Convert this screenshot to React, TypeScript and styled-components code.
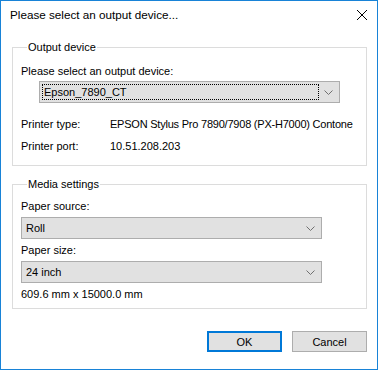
import React from "react";
import styled, { createGlobalStyle } from "styled-components";

const Global = createGlobalStyle`
  html, body { margin: 0; padding: 0; background: #ffffff; }
  body {
    font-family: "Liberation Sans", Arial, sans-serif;
    font-size: 11px;
    line-height: 16px;
    color: #000000;
  }
  * { box-sizing: border-box; }
`;

const Window = styled.div`
  width: 378px;
  height: 370px;
  border: 1px solid #1883d7;
  background: #ffffff;
  display: flex;
  flex-direction: column;
`;

const TitleBar = styled.div`
  height: 29px;
  display: flex;
  align-items: flex-start;
  justify-content: space-between;
  padding: 6px 10px 0 9px;
`;

const Title = styled.span`
  font-size: 11.7px;
  line-height: 16px;
`;

const CloseButton = styled.div`
  width: 10px;
  height: 10px;
  margin-top: 3px;
  display: flex;
`;

const Body = styled.div`
  flex: 1;
  display: flex;
  flex-direction: column;
  padding: 0 10px 0 11px;
`;

const Group = styled.fieldset<{ $top: number; $pt: number; $pb: number }>`
  margin: ${(p) => p.$top}px 0 0 0;
  border: 1px solid #dcdcdc;
  padding: ${(p) => p.$pt}px 8px ${(p) => p.$pb}px 8px;
  display: flex;
  flex-direction: column;
  min-width: 0;
`;

const Legend = styled.legend`
  padding: 0 1px;
  margin-left: 6px;
  line-height: 16px;
`;

const Label = styled.div<{ $gap?: number }>`
  margin-top: ${(p) => p.$gap ?? 0}px;
  line-height: 16px;
  white-space: nowrap;
`;

const Combo = styled.div<{ $indent?: number; $gap: number }>`
  margin-top: ${(p) => p.$gap}px;
  margin-left: ${(p) => p.$indent ?? 0}px;
  width: 301px;
  height: 22px;
  background: #e1e1e1;
  border: 1px solid #adadad;
  display: flex;
  align-items: stretch;
  padding: 2px 0 2px 2px;
`;

const ComboValue = styled.div<{ $focused?: boolean }>`
  flex: 1;
  display: flex;
  align-items: center;
  padding-left: 1px;
  border: 1px dotted ${(p) => (p.$focused ? "#000000" : "transparent")};
  line-height: 14px;
`;

const Arrow = styled.div`
  width: 20px;
  display: flex;
  align-items: center;
  justify-content: center;
  padding-right: 2px;
`;

const InfoRow = styled.div<{ $gap: number }>`
  margin-top: ${(p) => p.$gap}px;
  display: flex;
  line-height: 16px;
  white-space: nowrap;
`;

const InfoKey = styled.span`
  width: 89px;
  flex: none;
`;

const InfoValue = styled.span<{ $tight?: boolean }>`
  letter-spacing: ${(p) => (p.$tight ? "-0.22px" : "normal")};
`;

const Footer = styled.div`
  margin-top: 22px;
  display: flex;
  justify-content: flex-end;
  gap: 10px;
`;

const Button = styled.div<{ $default?: boolean }>`
  width: 75px;
  height: 21px;
  background: #e1e1e1;
  border: ${(p) => (p.$default ? "2px solid #0078d7" : "1px solid #adadad")};
  display: flex;
  align-items: center;
  justify-content: center;
  line-height: 16px;
`;

const Chevron = () => (
  <svg width="9" height="5" viewBox="0 0 9 5">
    <polyline points="0.5,0.5 4.5,4.5 8.5,0.5" fill="none" stroke="#707070" strokeWidth="1" />
  </svg>
);

const ComboBox = ({ value, focused, indent, gap }: { value: string; focused?: boolean; indent?: number; gap: number }) => (
  <Combo $indent={indent} $gap={gap}>
    <ComboValue $focused={focused}>{value}</ComboValue>
    <Arrow>
      <Chevron />
    </Arrow>
  </Combo>
);

export default function App() {
  return (
    <>
      <Global />
      <Window>
        <TitleBar>
          <Title>Please select an output device...</Title>
          <CloseButton>
            <svg width="10" height="10" viewBox="0 0 10 10">
              <path d="M0 0 L10 10 M10 0 L0 10" stroke="#000" strokeWidth="1" fill="none" />
            </svg>
          </CloseButton>
        </TitleBar>
        <Body>
          <Group $top={9} $pt={8} $pb={11}>
            <Legend>Output device</Legend>
            <Label>Please select an output device:</Label>
            <ComboBox value="Epson_7890_CT" focused indent={18} gap={2} />
            <InfoRow $gap={13}>
              <InfoKey>Printer type:</InfoKey>
              <InfoValue $tight>EPSON Stylus Pro 7890/7908 (PX-H7000) Contone</InfoValue>
            </InfoRow>
            <InfoRow $gap={6}>
              <InfoKey>Printer port:</InfoKey>
              <InfoValue>10.51.208.203</InfoValue>
            </InfoRow>
          </Group>
          <Group $top={10} $pt={6} $pb={6}>
            <Legend>Media settings</Legend>
            <Label>Paper source:</Label>
            <ComboBox value="Roll" gap={3} />
            <Label $gap={3}>Paper size:</Label>
            <ComboBox value="24 inch" gap={3} />
            <InfoRow $gap={3}>609.6 mm x 15000.0 mm</InfoRow>
          </Group>
          <Footer>
            <Button $default>OK</Button>
            <Button>Cancel</Button>
          </Footer>
        </Body>
      </Window>
    </>
  );
}
